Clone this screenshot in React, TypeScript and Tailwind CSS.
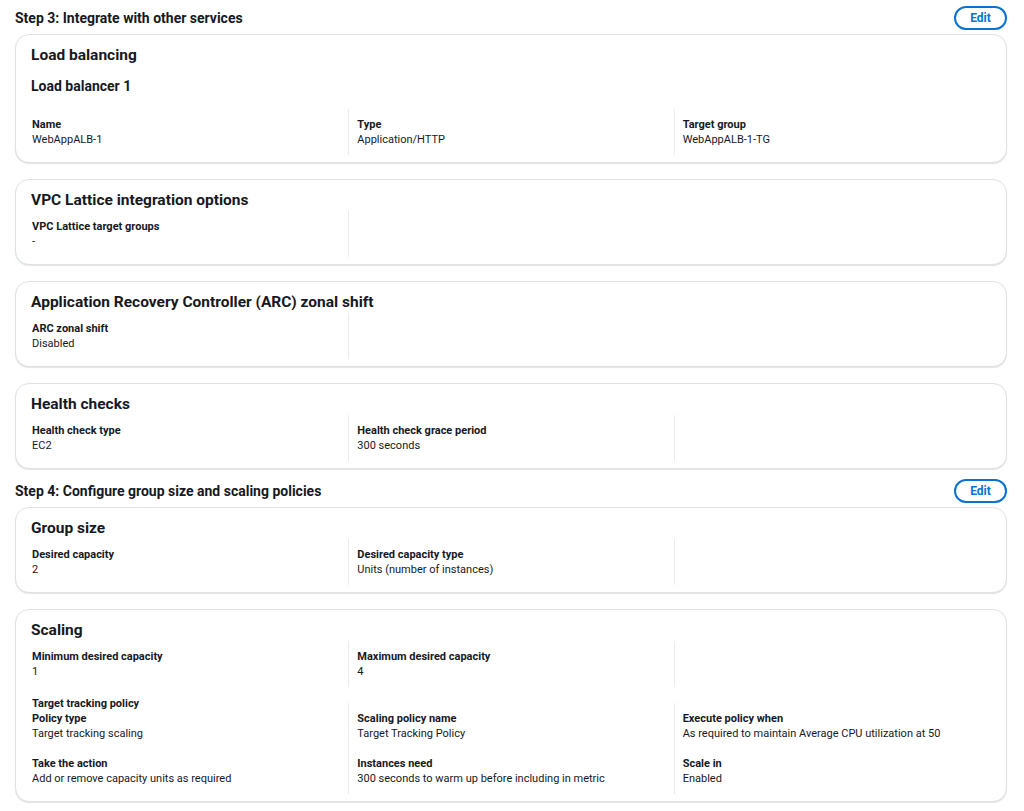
import React from 'react';

type Pair = { label: string; value: string };

// a column of the key/value grid; first column has no visible divider
function Column({ pairs, first, heading }: { pairs: Pair[]; first?: boolean; heading?: string }) {
  return (
    <div className={`pl-2 pr-2 py-2 border-l ${first ? 'border-l-transparent' : 'border-l-[#e9ebed]'}`}>
      {heading && <div className="font-bold -mt-[15px]">{heading}</div>}
      <div className="flex flex-col gap-[15px]">
        {pairs.map((p) => (
          <div key={p.label}>
            <div className="font-bold">{p.label}</div>
            <div>{p.value}</div>
          </div>
        ))}
      </div>
    </div>
  );
}

function Grid({ children, className = '' }: { children: React.ReactNode; className?: string }) {
  return <div className={`grid grid-cols-3 text-[11px] leading-[15px] ${className}`}>{children}</div>;
}

function Card({ title, children }: { title: string; children: React.ReactNode }) {
  return (
    <section className="rounded-[14px] border border-[#dfe2e5] bg-white px-[7px] pt-[10px] pb-[7px] shadow-[0_1px_1px_rgba(0,28,36,0.12)]">
      <h2 className="pl-2 text-[15.5px] leading-[21px] font-bold">{title}</h2>
      {children}
    </section>
  );
}

function StepHeader({ title }: { title: string }) {
  return (
    <div className="flex h-6 items-center justify-between mb-1">
      <h1 className="pt-px text-[14px] font-bold">{title}</h1>
      <button className="h-6 w-[53px] rounded-full border-2 border-[#0972d3] text-[12px] font-bold text-[#0972d3]">
        Edit
      </button>
    </div>
  );
}

export default function App() {
  return (
    <div
      className="min-h-screen bg-white pl-[15px] pr-[17px] pt-[6px] text-[#16191f]"
      style={{ fontFamily: 'Roboto, "Open Sans", Arial, sans-serif' }}
    >
      <StepHeader title="Step 3: Integrate with other services" />
      <div className="flex flex-col gap-4">
        <section className="rounded-[14px] border border-[#dfe2e5] bg-white px-[7px] pt-[10px] pb-[7px] shadow-[0_1px_1px_rgba(0,28,36,0.12)]">
          <h2 className="pl-2 text-[15.5px] leading-[21px] font-bold">Load balancing</h2>
          <h3 className="pl-2 mt-[11px] text-[14px] leading-[18px] font-bold">Load balancer 1</h3>
          <Grid className="mt-[14px]">
            <Column first pairs={[{ label: 'Name', value: 'WebAppALB-1' }]} />
            <Column pairs={[{ label: 'Type', value: 'Application/HTTP' }]} />
            <Column pairs={[{ label: 'Target group', value: 'WebAppALB-1-TG' }]} />
          </Grid>
        </section>

        <Card title="VPC Lattice integration options">
          <Grid>
            <Column first pairs={[{ label: 'VPC Lattice target groups', value: '-' }]} />
            <Column pairs={[]} />
          </Grid>
        </Card>

        <Card title="Application Recovery Controller (ARC) zonal shift">
          <Grid>
            <Column first pairs={[{ label: 'ARC zonal shift', value: 'Disabled' }]} />
            <Column pairs={[]} />
          </Grid>
        </Card>

        <Card title="Health checks">
          <Grid>
            <Column first pairs={[{ label: 'Health check type', value: 'EC2' }]} />
            <Column pairs={[{ label: 'Health check grace period', value: '300 seconds' }]} />
            <Column pairs={[]} />
          </Grid>
        </Card>
      </div>

      <div className="mt-[10px]">
        <StepHeader title="Step 4: Configure group size and scaling policies" />
      </div>
      <div className="flex flex-col gap-4 pb-2">
        <Card title="Group size">
          <Grid>
            <Column first pairs={[{ label: 'Desired capacity', value: '2' }]} />
            <Column pairs={[{ label: 'Desired capacity type', value: 'Units (number of instances)' }]} />
            <Column pairs={[]} />
          </Grid>
        </Card>

        <Card title="Scaling">
          <Grid>
            <Column first pairs={[{ label: 'Minimum desired capacity', value: '1' }]} />
            <Column pairs={[{ label: 'Maximum desired capacity', value: '4' }]} />
            <Column pairs={[]} />
          </Grid>
          <Grid className="mt-4">
            <Column
              first
              heading="Target tracking policy"
              pairs={[
                { label: 'Policy type', value: 'Target tracking scaling' },
                { label: 'Take the action', value: 'Add or remove capacity units as required' },
              ]}
            />
            <Column
              pairs={[
                { label: 'Scaling policy name', value: 'Target Tracking Policy' },
                { label: 'Instances need', value: '300 seconds to warm up before including in metric' },
              ]}
            />
            <Column
              pairs={[
                { label: 'Execute policy when', value: 'As required to maintain Average CPU utilization at 50' },
                { label: 'Scale in', value: 'Enabled' },
              ]}
            />
          </Grid>
        </Card>
      </div>
    </div>
  );
}
